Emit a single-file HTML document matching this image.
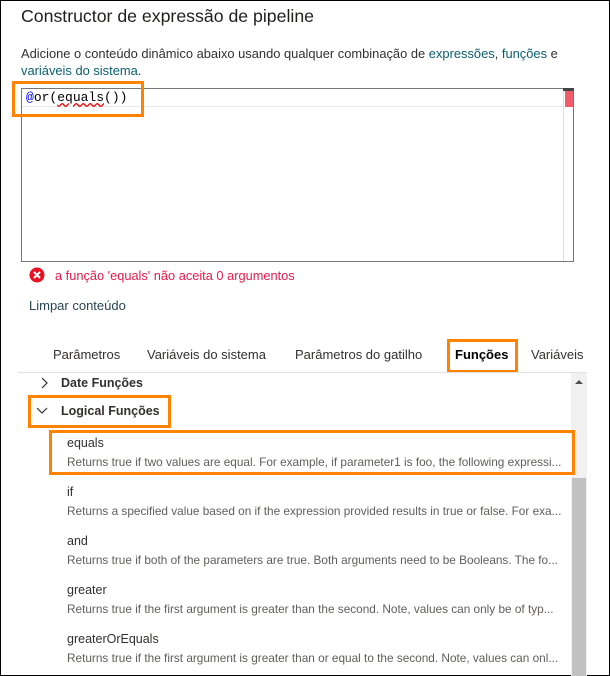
<!DOCTYPE html>
<html><head><meta charset="utf-8"><style>
*{margin:0;padding:0;box-sizing:border-box}
body{width:610px;height:676px;position:relative;overflow:hidden;background:#fff;font-family:"Liberation Sans",sans-serif;color:#323130}
.a{position:absolute;white-space:nowrap}
.ob{position:absolute;border:3px solid #ff8200}
.n{font-size:12.5px;color:#323130}
.d{font-size:11.8px;color:#605e5c}
</style></head><body>
<div class="a" style="left:0;top:0;width:610px;height:676px;border:1px solid #000"></div>
<div class="a" style="left:21px;top:6px;font-size:17.7px;color:#201f1e">Constructor de expressão de pipeline</div>
<div class="a" style="left:21px;top:45px;font-size:12.9px;line-height:17px;color:#323130">Adicione o conteúdo dinâmico abaixo usando qualquer combinação de <span style="color:#0b5f6e">expressões</span>, <span style="color:#0b5f6e">funções</span> e<br><span style="color:#0b5f6e">variáveis do sistema</span>.</div>
<div class="a" style="left:21px;top:88px;width:553px;height:174px;border:1px solid #777"></div>
<div class="a" style="left:22px;top:89px;width:541px;height:18px;border-bottom:1px solid #e8e8e8"></div>
<div class="a" style="left:563px;top:89px;width:1px;height:172px;background:#ddd"></div>
<div class="a" style="left:565px;top:91px;width:8px;height:16px;background:#f25c6a"></div>
<div class="a" style="left:563px;top:88px;width:11px;height:3px;background:#444"></div>
<div class="a" style="left:26px;top:90px;font-family:'Liberation Mono',monospace;font-size:13px;color:#000"><span style="color:#00f">@</span>or(<span style="text-decoration:underline wavy #e00;">equals</span>())</div>
<div class="ob" style="left:12px;top:81px;width:132px;height:36px"></div>
<svg class="a" style="left:29px;top:267px" width="16" height="16"><circle cx="8" cy="8" r="7.5" fill="#e81123"/><path d="M5 5L11 11M11 5L5 11" stroke="#fff" stroke-width="2"/></svg>
<div class="a" style="left:55px;top:268px;font-size:12.8px;color:#e81a4b">a função 'equals' não aceita 0 argumentos</div>
<div class="a" style="left:29px;top:298px;font-size:13px;color:#2b4650">Limpar conteúdo</div>
<div class="a" style="left:53px;top:347px;font-size:13px">Parâmetros</div>
<div class="a" style="left:147px;top:347px;font-size:13px">Variáveis do sistema</div>
<div class="a" style="left:295px;top:347px;font-size:13px">Parâmetros do gatilho</div>
<div class="a" style="left:455px;top:347px;font-size:13px;color:#000;font-weight:bold">Funções</div>
<div class="a" style="left:531px;top:347px;font-size:13px">Variáveis</div>
<div class="ob" style="left:447px;top:339px;width:71px;height:34px"></div>
<div class="a" style="left:18px;top:372px;width:569px;height:1px;background:#e1e1e1"></div>
<div class="a" style="left:571px;top:373px;width:16px;height:303px;background:#f1f1f1"></div>
<div class="a" style="left:572px;top:478px;width:14px;height:198px;background:#c1c1c1"></div>
<div class="a" style="left:575px;top:380px;width:0;height:0;border-left:4px solid transparent;border-right:4px solid transparent;border-bottom:4px solid #505050"></div>
<svg class="a" style="left:40px;top:377px" width="10" height="12"><path d="M2 1L7 6L2 11" stroke="#323130" fill="none" stroke-width="1.2"/></svg>
<div class="a" style="left:61px;top:376px;font-size:12.5px;font-weight:bold;color:#323130">Date Funções</div>
<svg class="a" style="left:36px;top:406px" width="12" height="10"><path d="M1 2L6 7L11 2" stroke="#323130" fill="none" stroke-width="1.2"/></svg>
<div class="a" style="left:61px;top:404px;font-size:12.5px;font-weight:bold;color:#323130">Logical Funções</div>
<div class="ob" style="left:28px;top:395px;width:143px;height:33px"></div>
<div class="a n" style="left:67px;top:436px">equals</div>
<div class="a d" style="left:67px;top:455px">Returns true if two values are equal. For example, if parameter1 is foo, the following expressi...</div>
<div class="ob" style="left:49px;top:430px;width:526px;height:45px"></div>
<div class="a n" style="left:67px;top:485px">if</div>
<div class="a d" style="left:67px;top:504px">Returns a specified value based on if the expression provided results in true or false. For exa...</div>
<div class="a n" style="left:67px;top:534px">and</div>
<div class="a d" style="left:67px;top:553px">Returns true if both of the parameters are true. Both arguments need to be Booleans. The fo...</div>
<div class="a n" style="left:67px;top:583px">greater</div>
<div class="a d" style="left:67px;top:602px">Returns true if the first argument is greater than the second. Note, values can only be of typ...</div>
<div class="a n" style="left:67px;top:632px">greaterOrEquals</div>
<div class="a d" style="left:67px;top:651px">Returns true if the first argument is greater than or equal to the second. Note, values can onl...</div>
</body></html>
